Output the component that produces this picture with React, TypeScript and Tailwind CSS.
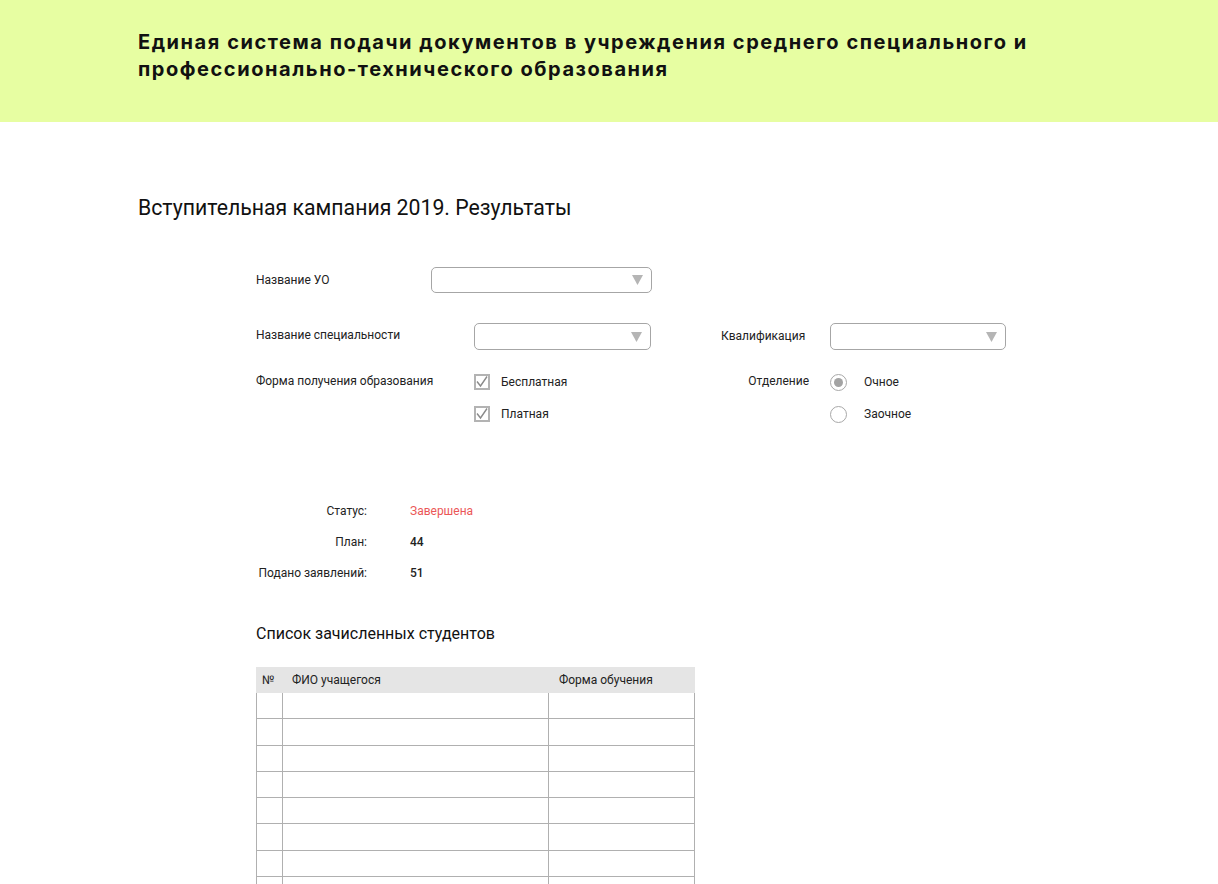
import React from "react";

const Select = ({ w, h }: { w: string; h: string }) => (
  <div className={`${w} ${h} rounded-[5px] border border-[#a6a6a6] bg-white flex items-center justify-end pr-[8px]`}>
    <svg width="11" height="10" viewBox="0 0 11 10">
      <path d="M0 0 H11 L5.5 10 Z" fill="#b5b5b5" />
    </svg>
  </div>
);

const Checkbox = () => (
  <div className="w-[16px] h-[16px] border-2 border-[#b3b3b3] bg-white flex items-center justify-center">
    <svg width="12" height="12" viewBox="0 0 12 12">
      <path d="M1 5.5 L4.5 10 L11 0.5" fill="none" stroke="#8a8a8a" strokeWidth="1.4" />
    </svg>
  </div>
);

const Radio = ({ on }: { on?: boolean }) => (
  <div className="w-[17px] h-[17px] rounded-full border-[1.5px] border-[#a8a8a8] bg-white flex items-center justify-center">
    {on && <div className="w-[9px] h-[9px] rounded-full bg-[#a3a3a3]" />}
  </div>
);

export default function App() {
  const rows = Array.from({ length: 8 });
  return (
    <div className="min-h-screen bg-white text-black" style={{ fontFamily: "Roboto, 'Noto Sans', sans-serif" }}>
      <header className="h-[122px] bg-[#e7fea2] pl-[138px] pt-[29px]">
        <h1
          className="text-[20px] leading-[27px] font-bold text-[#111] tracking-[1.55px]"
          style={{ fontFamily: "Inter, 'Noto Sans', sans-serif" }}
        >
          Единая система подачи документов в учреждения среднего специального и
          <br />
          профессионально-технического образования
        </h1>
      </header>

      <main className="pl-[138px] pt-[74px]">
        <h2 className="text-[21.25px] leading-[24px] text-[#111]">Вступительная кампания 2019. Результаты</h2>

        <div className="pl-[118px] pt-[47px] text-[12px] text-[#222]">
          {/* Row 1 */}
          <div className="flex items-center h-[26px]">
            <div className="w-[175px]">Название УО</div>
            <Select w="w-[221px]" h="h-[26px]" />
          </div>

          {/* Row 2 */}
          <div className="flex items-center h-[27px] mt-[30px]">
            <div className="w-[218px] -mt-[3px]">Название специальности</div>
            <Select w="w-[177px]" h="h-[27px]" />
            <div className="w-[70px]" />
            <div className="w-[109px] -mt-[1px]">Квалификация</div>
            <Select w="w-[176px]" h="h-[27px]" />
          </div>

          {/* Row 3 */}
          <div className="flex items-start mt-[22px]">
            <div className="w-[218px] leading-[18px]">Форма получения образования</div>
            <div className="w-[177px] flex flex-col gap-[12px]">
              <div className="flex items-center h-[20px] gap-[11px]">
                <Checkbox />
                <span>Бесплатная</span>
              </div>
              <div className="flex items-center h-[20px] gap-[11px]">
                <Checkbox />
                <span>Платная</span>
              </div>
            </div>
            <div className="w-[70px]" />
            <div className="w-[109px] pr-[21px] text-right leading-[18px]">Отделение</div>
            <div className="flex flex-col gap-[12px]">
              <div className="flex items-center h-[20px] gap-[17px]">
                <Radio on />
                <span>Очное</span>
              </div>
              <div className="flex items-center h-[20px] gap-[17px]">
                <Radio />
                <span>Заочное</span>
              </div>
            </div>
          </div>

          {/* Status */}
          <div className="mt-[77px] flex flex-col gap-[11px]">
            <div className="flex items-center h-[20px]">
              <div className="w-[111px] text-right">Статус:</div>
              <div className="pl-[43px] text-[#eb5757]">Завершена</div>
            </div>
            <div className="flex items-center h-[20px]">
              <div className="w-[111px] text-right">План:</div>
              <div className="pl-[43px] font-medium">44</div>
            </div>
            <div className="flex items-center h-[20px]">
              <div className="w-[111px] text-right">Подано заявлений:</div>
              <div className="pl-[43px] font-medium">51</div>
            </div>
          </div>

          <h3 className="mt-[41px] text-[16px] leading-[20px] text-[#111]">Список зачисленных студентов</h3>

          <div className="mt-[23px] w-[439px]">
            <div className="grid grid-cols-[26px_266px_147px] h-[26px] bg-[#e5e5e5] items-center">
              <div className="pl-[6px]">№</div>
              <div className="pl-[10px]">ФИО учащегося</div>
              <div className="pl-[11px]">Форма обучения</div>
            </div>
            {rows.map((_, i) => (
              <div
                key={i}
                className="grid grid-cols-[26px_266px_147px] h-[26.3px] border-b border-[#b0b0b0] border-x"
              >
                <div className="border-r border-[#b0b0b0]" />
                <div className="border-r border-[#b0b0b0]" />
                <div />
              </div>
            ))}
          </div>
        </div>
      </main>
    </div>
  );
}
